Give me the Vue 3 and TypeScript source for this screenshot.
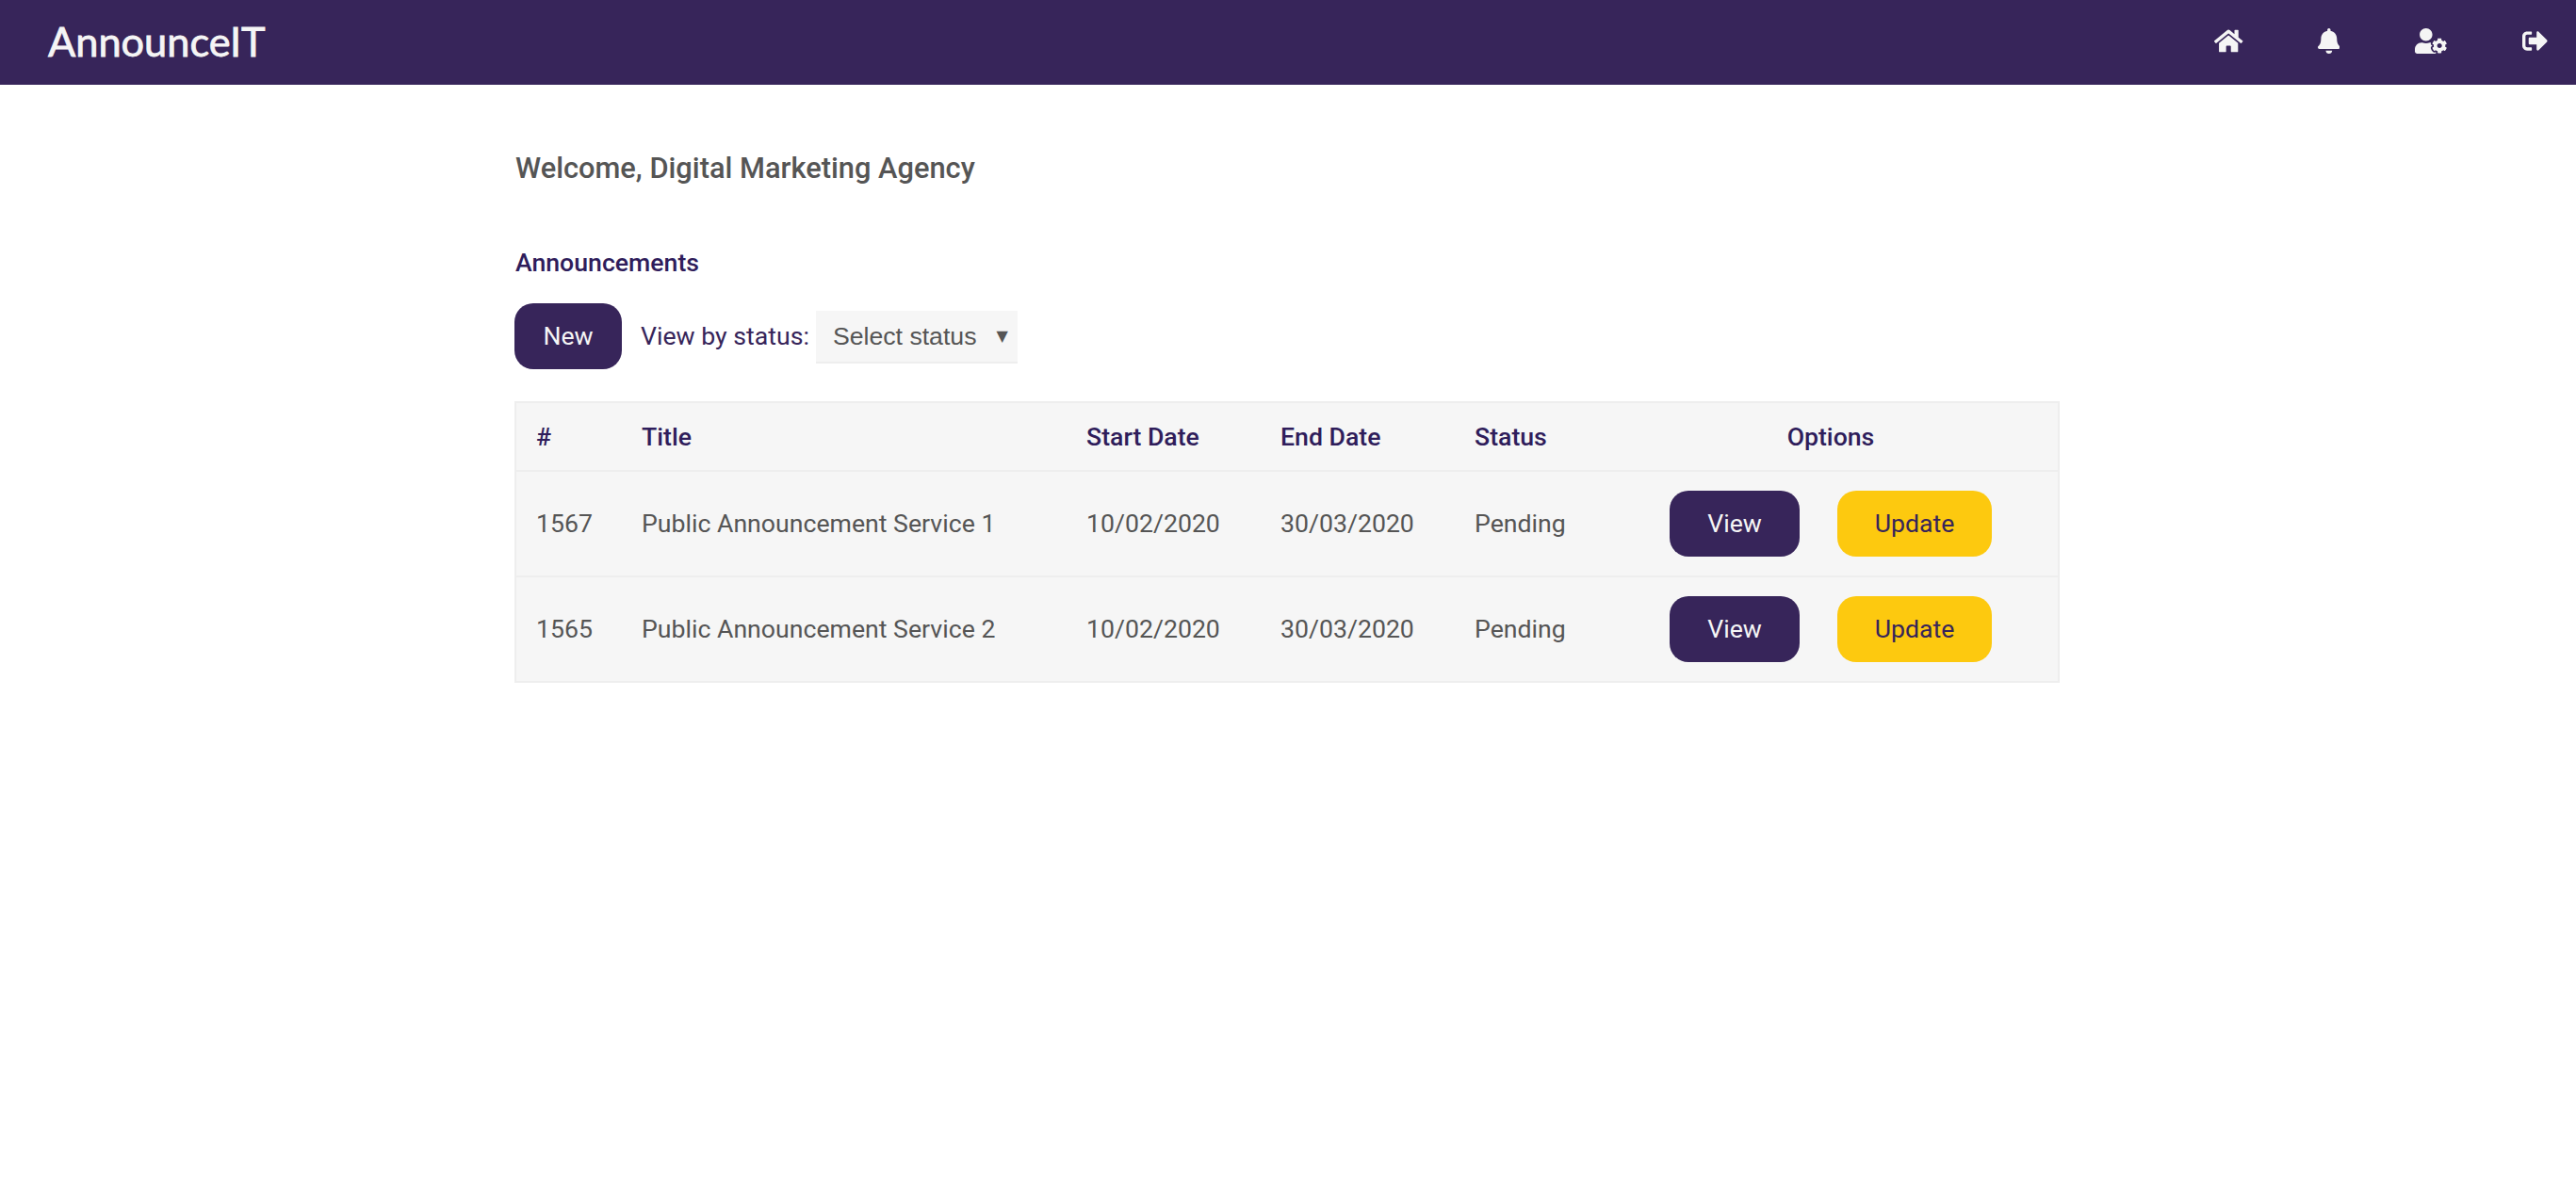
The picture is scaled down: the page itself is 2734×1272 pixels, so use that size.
<script setup lang="ts">
interface Row { id: number; title: string; start: string; end: string; status: string }
const rows: Row[] = [
  { id: 1567, title: 'Public Announcement Service 1', start: '10/02/2020', end: '30/03/2020', status: 'Pending' },
  { id: 1565, title: 'Public Announcement Service 2', start: '10/02/2020', end: '30/03/2020', status: 'Pending' },
]
</script>

<template>
  <div class="page">
    <header class="nav">
      <div class="logo">AnnounceIT</div>
      <nav class="icons">
        <svg class="ic home" viewBox="0 0 576 512"><path d="M280.37 148.26L96 300.11V464a16 16 0 0 0 16 16l112.06-.29a16 16 0 0 0 15.92-16V368a16 16 0 0 1 16-16h64a16 16 0 0 1 16 16v95.64a16 16 0 0 0 16 16.05L464 480a16 16 0 0 0 16-16V300L295.67 148.26a12.19 12.19 0 0 0-15.3 0zM571.6 251.47L488 182.56V44.05a12 12 0 0 0-12-12h-56a12 12 0 0 0-12 12v72.61L318.47 43a48 48 0 0 0-61 0L4.34 251.47a12 12 0 0 0-1.6 16.9l25.5 31A12 12 0 0 0 45.15 301l235.22-193.74a12.19 12.19 0 0 1 15.3 0L530.9 301a12 12 0 0 0 16.9-1.6l25.5-31a12 12 0 0 0-1.7-16.93z"/></svg>
        <svg class="ic bell" viewBox="0 0 448 512"><path d="M224 512c35.32 0 63.97-28.65 63.97-64H160.03c0 35.35 28.65 64 63.97 64zm215.39-149.71c-19.32-20.76-55.47-51.99-55.47-154.29 0-77.7-54.48-139.9-127.94-155.16V32c0-17.67-14.32-32-31.98-32s-31.98 14.33-31.98 32v20.84C118.56 68.1 64.08 130.3 64.08 208c0 102.3-36.15 133.53-55.47 154.29-6 6.45-8.66 14.16-8.61 21.71.11 16.4 12.98 32 32.1 32h383.8c19.12 0 32-15.6 32.1-32 .05-7.55-2.61-15.27-8.61-21.71z"/></svg>
        <svg class="ic cog" viewBox="0 0 640 512"><path d="M610.5 373.3c2.6-14.1 2.6-28.5 0-42.6l25.8-14.9c3-1.7 4.3-5.2 3.3-8.5-6.7-21.6-18.2-41.2-33.2-57.4-2.3-2.5-6-3.1-9-1.4l-25.8 14.9c-10.9-9.3-23.4-16.5-36.9-21.3v-29.8c0-3.4-2.4-6.4-5.7-7.1-22.3-5-45-4.8-66.2 0-3.3.7-5.7 3.7-5.7 7.1v29.8c-13.5 4.8-26 12-36.9 21.3l-25.8-14.9c-2.9-1.7-6.7-1.1-9 1.4-15 16.2-26.5 35.8-33.2 57.4-1 3.3.4 6.8 3.3 8.5l25.8 14.9c-2.6 14.1-2.6 28.5 0 42.6l-25.8 14.9c-3 1.7-4.3 5.2-3.3 8.5 6.7 21.6 18.2 41.1 33.2 57.4 2.3 2.5 6 3.1 9 1.4l25.8-14.9c10.9 9.3 23.4 16.5 36.9 21.3v29.8c0 3.4 2.4 6.4 5.7 7.1 22.3 5 45 4.8 66.2 0 3.3-.7 5.7-3.7 5.7-7.1v-29.8c13.5-4.8 26-12 36.9-21.3l25.8 14.9c2.9 1.7 6.7 1.1 9-1.4 15-16.2 26.5-35.8 33.2-57.4 1-3.3-.4-6.8-3.3-8.5l-25.8-14.9zM496 400.5c-26.8 0-48.5-21.8-48.5-48.5s21.8-48.5 48.5-48.5 48.5 21.8 48.5 48.5-21.7 48.5-48.5 48.5zM224 256c70.7 0 128-57.3 128-128S294.7 0 224 0 96 57.3 96 128s57.3 128 128 128zm201.2 226.5c-2.3-1.2-4.6-2.6-6.8-3.9l-7.9 4.6c-6 3.4-12.8 5.3-19.6 5.3-10.9 0-21.4-4.6-28.9-12.6-18.3-19.8-32.3-43.9-40.2-69.6-5.5-17.7 1.9-36.4 17.9-45.7l7.9-4.6c-.1-2.6-.1-5.2 0-7.8l-7.9-4.6c-16-9.2-23.4-28-17.9-45.7.9-2.9 2.2-5.8 3.2-8.7-3.8-.3-7.5-1.2-11.4-1.2h-16.7c-22.2 10.2-46.9 16-72.9 16s-50.6-5.8-72.9-16h-16.7C60.2 288 0 348.2 0 422.4V464c0 26.5 21.5 48 48 48h352c10.1 0 19.5-3.2 27.2-8.5-1.2-3.8-2-7.7-2-11.8v-9.2z"/></svg>
        <svg class="ic out" viewBox="0 0 512 512"><path d="M497 273L329 441c-15 15-41 4.5-41-17v-96H152c-13.3 0-24-10.7-24-24v-96c0-13.3 10.7-24 24-24h136V88c0-21.4 25.9-32 41-17l168 168c9.3 9.4 9.3 24.6 0 34zM192 436v-40c0-6.6-5.4-12-12-12H96c-17.7 0-32-14.3-32-32V160c0-17.7 14.3-32 32-32h84c6.6 0 12-5.4 12-12V76c0-6.6-5.4-12-12-12H96c-53 0-96 43-96 96v192c0 53 43 96 96 96h84c6.6 0 12-5.4 12-12z"/></svg>
      </nav>
    </header>

    <main class="main">
      <h1 class="welcome">Welcome, Digital Marketing Agency</h1>
      <h2 class="section">Announcements</h2>
      <div class="toolbar">
        <button class="btn primary new">New</button>
        <span class="by">View by status:</span>
        <div class="select-wrap">
          <select class="select">
            <option>Select status</option>
          </select>
        </div>
      </div>

      <table class="table">
        <colgroup>
          <col class="c1" /><col class="c2" /><col class="c3" /><col class="c4" /><col class="c5" /><col />
        </colgroup>
        <thead>
          <tr>
            <th>#</th>
            <th>Title</th>
            <th>Start Date</th>
            <th>End Date</th>
            <th>Status</th>
            <th class="center">Options</th>
          </tr>
        </thead>
        <tbody>
          <tr v-for="r in rows" :key="r.id">
            <td>{{ r.id }}</td>
            <td>{{ r.title }}</td>
            <td>{{ r.start }}</td>
            <td>{{ r.end }}</td>
            <td>{{ r.status }}</td>
            <td class="center">
              <div class="actions">
                <button class="btn primary view">View</button>
                <button class="btn accent update">Update</button>
              </div>
            </td>
          </tr>
        </tbody>
      </table>
    </main>
  </div>
</template>

<style>
html, body { margin: 0; background: #fff; }
</style>

<style scoped>
.page { font-family: Roboto, sans-serif; color: #555; min-height: 1272px; background: #fff; }
.nav {
  height: 90px; background: #37255a; display: flex; align-items: center;
  justify-content: space-between; padding: 0 30px 3px 51px; box-sizing: border-box;
}
.logo {
  font-family: Lato, sans-serif; font-size: 43.3px; font-weight: 400; color: #f5f5f5;
  line-height: 1; -webkit-text-stroke: 0.8px #f5f5f5;
}
.icons { display: flex; align-items: center; gap: 80px; }
.ic { height: 27px; display: block; fill: #f5f5f5; }
.home { margin-right: -1px; }
.main { width: 1640px; margin-left: 546px; }
.welcome { margin: 0 0 0 1px; padding-top: 69px; font-size: 30.8px; line-height: 40px; font-weight: 500; color: #555; }
.section { margin: 0 0 0 1px; padding-top: 62px; font-size: 26.67px; line-height: 36px; font-weight: 500; color: #2f1d5b; }
.toolbar { display: flex; align-items: center; margin-top: 25px; height: 70px; }
.btn { border: 0; font-family: Roboto, sans-serif; font-size: 26.67px; height: 70px; border-radius: 20px; padding: 0; cursor: pointer; }
.primary { background: #37255a; color: #f5f5f5; }
.accent { background: #fdc90f; color: #37255a; }
.new { width: 114px; }
.by { margin-left: 20px; font-size: 26.67px; color: #37255a; }
.select-wrap { position: relative; margin: 2px 0 0 7px; width: 214px; height: 56px; }
.select-wrap::after {
  content: "▼"; position: absolute; right: 10px; top: 13px; font-size: 16px; line-height: 28px;
  color: #555; font-family: "DejaVu Sans", sans-serif; pointer-events: none;
}
.select {
  appearance: none; width: 100%; height: 100%; box-sizing: border-box; border: 0;
  border-bottom: 2px solid #eee; background: #f6f6f6; color: #555;
  font-family: "Liberation Sans", Arial, sans-serif; font-size: 26.67px; padding: 0 0 0 18px; border-radius: 0;
}
.table {
  margin-top: 34px; width: 100%; table-layout: fixed; border-collapse: collapse;
  background: #f6f6f6; border: 2px solid #eee; font-size: 26.67px;
}
.c1 { width: 113px; } .c2 { width: 472px; } .c3 { width: 206px; } .c4 { width: 206px; } .c5 { width: 154px; }
th, td { padding: 0 0 0 21px; text-align: left; border-bottom: 2px solid #eee; }
th { height: 71px; font-weight: 500; color: #2f1d5b; }
td { height: 110px; color: #555; font-weight: 400; }
.center { text-align: center; padding-left: 4px; }
.actions { display: flex; justify-content: center; gap: 40px; }
.view { width: 138px; }
.update { width: 164px; }
</style>
